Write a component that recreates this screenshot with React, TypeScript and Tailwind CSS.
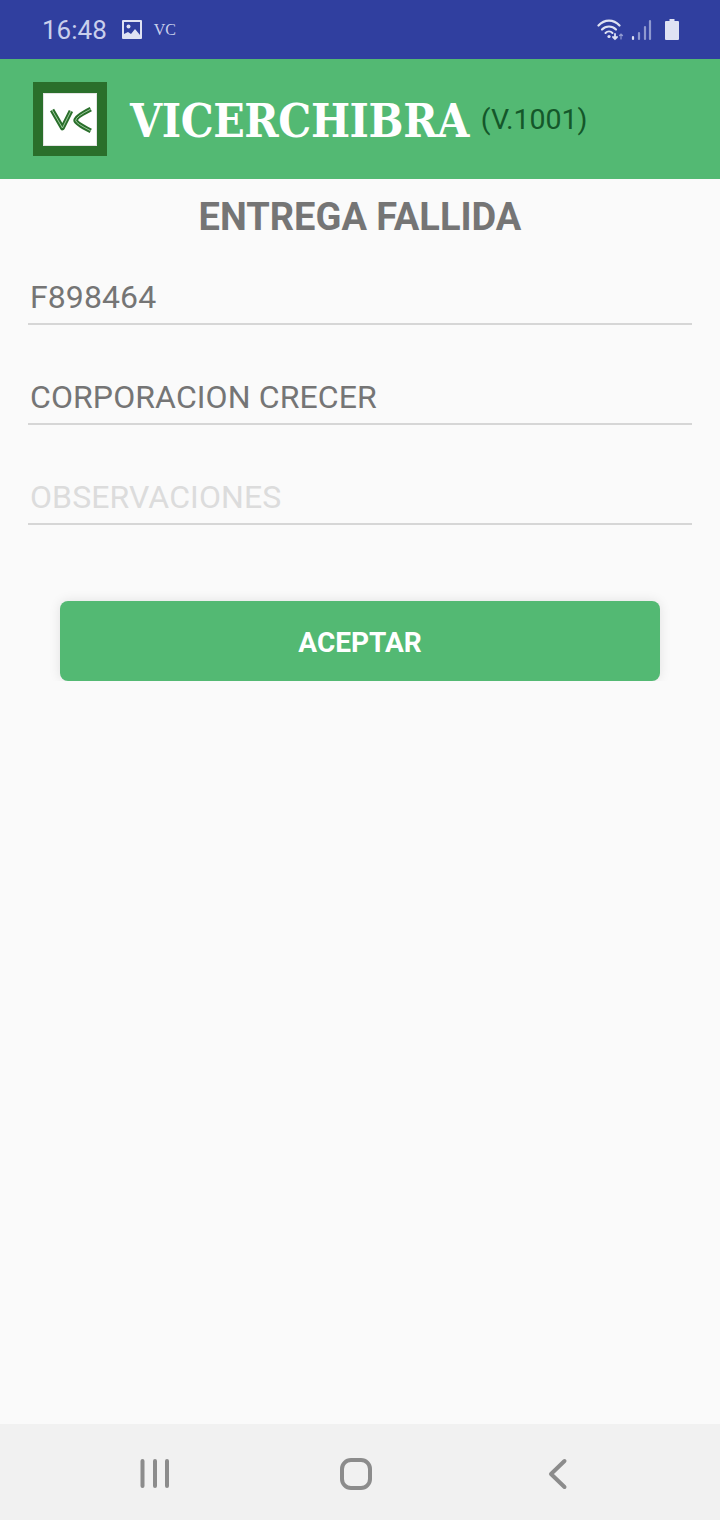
const App = () => {
  const fields = [
    { label: 'F898464', color: 'text-[#757575]' },
    { label: 'CORPORACION CRECER', color: 'text-[#757575]' },
    { label: 'OBSERVACIONES', color: 'text-[#dcdcdc]' },
  ];

  return (
    <div className="w-[720px] h-[1520px] flex flex-col bg-[#fafafa] overflow-hidden font-['Roboto',sans-serif]">
      {/* Status bar */}
      <div className="h-[59px] bg-[#303f9f] flex items-center pl-[42px] pr-[41px] text-[#c9cfec]">
        <span className="text-[26px] leading-none">16:48</span>
        <svg className="ml-[14px]" width="22" height="20" viewBox="0 0 22 20">
          <rect x="1" y="0" width="20" height="19" rx="1" fill="#dfe2f3" />
          <rect x="3" y="2" width="16" height="15" fill="#303f9f" />
          <circle cx="7.500" cy="6.500" r="2" fill="#dfe2f3" />
          <path fill="#dfe2f3" d="M3 17v-3l4-2 3 2 4-5 5 6v2z" />
        </svg>
        <span className="ml-[11px] text-[16px] leading-none font-['Liberation_Serif',serif]">VC</span>
        <div className="ml-auto flex items-center">
          <svg width="27" height="22" viewBox="0 0 27 22" fill="none" stroke="#dfe2f3" strokeLinecap="round">
            <path strokeWidth="2.200" d="M1.500 6.500c6-6.500 15-6.500 21 0" />
            <path strokeWidth="2.200" d="M5 10.500c4-4 10-4 14 0" />
            <path strokeWidth="2" d="M8.500 14c2-2 5-2 7 0" />
            <circle cx="12" cy="17.500" r="1.600" fill="#dfe2f3" stroke="none" />
            <path strokeWidth="1.800" d="M18 15v5M16 18l2 2 2-2" />
            <path strokeWidth="1.200" stroke="#8f99d0" d="M24 20v-5M22.500 16.500l1.500-1.500 1.500 1.500" />
          </svg>
          <svg className="ml-[7px]" width="21" height="22" viewBox="0 0 21 22" fill="none" strokeLinecap="round" strokeWidth="2.200">
            <path stroke="#dfe2f3" d="M2 20v-2" />
            <path stroke="#8f99d0" d="M8 20v-6M14 20V8M19 20V2" />
          </svg>
          <svg className="ml-[13px]" width="14" height="21" viewBox="0 0 14 21">
            <path fill="#dfe2f3" d="M4.500 0h5v2H13a1 1 0 0 1 1 1v17a1 1 0 0 1-1 1H1a1 1 0 0 1-1-1V3a1 1 0 0 1 1-1h3.500z" />
          </svg>
        </div>
      </div>

      {/* Header */}
      <div className="h-[120px] bg-[#53b973] flex items-center pl-[33px]">
        <div className="w-[74px] h-[74px] bg-[#2a6f2b] flex items-center justify-center">
          <div className="w-[54px] h-[53px] bg-white border border-[#e4e4e4]">
            <svg width="52" height="51" viewBox="0 0 54 54" fill="none" strokeLinejoin="round">
              <g stroke="#2a6f2b" strokeWidth="5">
                <path d="M8 17l11 19 9-18" />
                <path d="M49 16Q33 24 33 28Q33 31 49 39" />
              </g>
              <g stroke="#a5cfa5" strokeWidth="1">
                <path d="M8 17l11 19 9-18" />
                <path d="M49 16Q33 24 33 28Q33 31 49 39" />
              </g>
            </svg>
          </div>
        </div>
        <span className="ml-[23px] pt-[4px] text-[46px] leading-none font-bold tracking-[-0.4px] text-white font-['DejaVu_Serif',serif] [font-stretch:condensed]">VICERCHIBRA</span>
        <span className="ml-[12px] pt-[2px] text-[28.5px] leading-none text-[#14572a]">(V.1001)</span>
      </div>

      {/* Form */}
      <div className="flex-1 flex flex-col">
        <h1 className="mt-[16px] text-center text-[38px] leading-[44px] font-bold text-[#757575]">ENTREGA FALLIDA</h1>
        <div className="mt-[26px] px-[28px] flex flex-col gap-[40px]">
          {fields.map((field) => (
            <div key={field.label} className="h-[60px] border-b-2 border-[#d6d6d6] flex items-center pl-[2px] pt-[6px]">
              <span className={`text-[32px] leading-none tracking-[0.1px] ${field.color}`}>{field.label}</span>
            </div>
          ))}
        </div>
        <button className="mt-[76px] mx-[60px] h-[80px] pt-[3px] rounded-lg bg-[#53b973] text-white text-[28px] font-bold shadow-[0_0_12px_rgba(0,0,0,0.1)] [clip-path:inset(-20px_-20px_0_-20px)]">
          ACEPTAR
        </button>
      </div>

      {/* Nav bar */}
      <div className="h-[96px] bg-[#f1f1f1] relative">
        <svg className="absolute left-0 top-0" width="720" height="96" viewBox="0 0 720 96" fill="none" stroke="#8c8c8c" strokeWidth="4" strokeLinecap="round" strokeLinejoin="round">
          <path d="M142.500 37v25M155 37v25M167 37v25" />
          <rect x="342" y="36" width="28" height="28" rx="9" />
          <path d="M564.500 37L551 50l13.500 13" />
        </svg>
      </div>
    </div>
  );
};

export default App;
